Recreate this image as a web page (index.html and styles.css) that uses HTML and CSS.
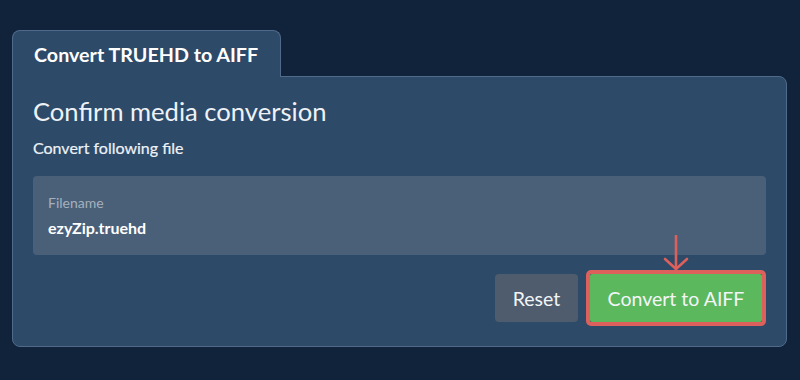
FILE: index.html
```html
<!DOCTYPE html>
<html>
<head>
<meta charset="utf-8">
<link rel="stylesheet" href="styles.css">
</head>
<body>
<div class="card">
  <div class="tab">Convert TRUEHD to AIFF</div>
  <div class="panel">
    <h1 class="title">Confirm media conversion</h1>
    <p class="subtitle">Convert following file</p>
    <div class="field">
      <div class="field-label">Filename</div>
      <div class="field-value">ezyZip.truehd</div>
    </div>
    <div class="actions">
      <button class="btn btn-reset">Reset</button>
      <span class="highlight">
        <svg class="arrow" width="28" height="36" viewBox="0 0 28 36" fill="none" stroke="#dc605b" stroke-width="2.6" stroke-linecap="round" stroke-linejoin="round">
          <path d="M14 1 V34"/>
          <path d="M3 24 L14 34 L25 24"/>
        </svg>
        <button class="btn btn-convert">Convert to AIFF</button>
      </span>
    </div>
  </div>
</div>
</body>
</html>
```

FILE: styles.css
```css
html, body {
  margin: 0;
  padding: 0;
  background: #11233a;
  font-family: Lato, "Open Sans", sans-serif;
  color: #eef2f7;
}

.card {
  padding: 30px 13px 0 12px;
}

.tab {
  display: inline-block;
  box-sizing: border-box;
  height: 47px;
  width: 269px;
  padding: 12px 0 0 21px;
  background: #2d4a69;
  border: 1px solid #4f6a8b;
  border-bottom: none;
  border-radius: 8px 8px 0 0;
  font-size: 19.7px;
  font-weight: 700;
  color: #ffffff;
  position: relative;
  z-index: 1;
  margin-bottom: -1px;
}

.panel {
  background: #2d4a69;
  border: 1px solid #4f6a8b;
  border-radius: 0 8px 8px 8px;
  padding: 19px 20px 20px 20px;
}

.title {
  margin: 0;
  font-size: 25.6px;
  font-weight: 400;
  line-height: 31px;
  color: #eef2f7;
}

.subtitle {
  margin: 11px 0 0;
  font-size: 16px;
  line-height: 19px;
  font-weight: 400;
  color: #eef2f7;
  -webkit-text-stroke: 0.2px #eef2f7;
}

.field {
  margin-top: 19px;
  background: #4a6079;
  border-radius: 4px;
  padding: 18px 15px 18px;
}

.field-label {
  font-size: 14px;
  line-height: 17px;
  color: #a5b0bd;
}

.field-value {
  margin-top: 7px;
  font-size: 16px;
  line-height: 19px;
  font-weight: 700;
  color: #ffffff;
}

.actions {
  display: flex;
  justify-content: flex-end;
  align-items: center;
  gap: 8px;
  margin-top: 15px;
}

.btn {
  font-family: Lato, "Open Sans", sans-serif;
  font-size: 19.5px;
  color: #f2f5f8;
  border: none;
  border-radius: 4px;
  height: 48px;
  padding: 0;
  cursor: pointer;
}

.btn-reset {
  background: #4e5c6d;
  width: 83px;
}

.highlight {
  position: relative;
  display: block;
  border: 4px solid #dc605b;
  border-radius: 5px;
  line-height: 0;
}

.btn-convert {
  background: #5cb85c;
  width: 172px;
  border-radius: 2px;
}

.arrow {
  position: absolute;
  left: 50%;
  margin-left: -14px;
  bottom: calc(100% + 3px);
}
```
